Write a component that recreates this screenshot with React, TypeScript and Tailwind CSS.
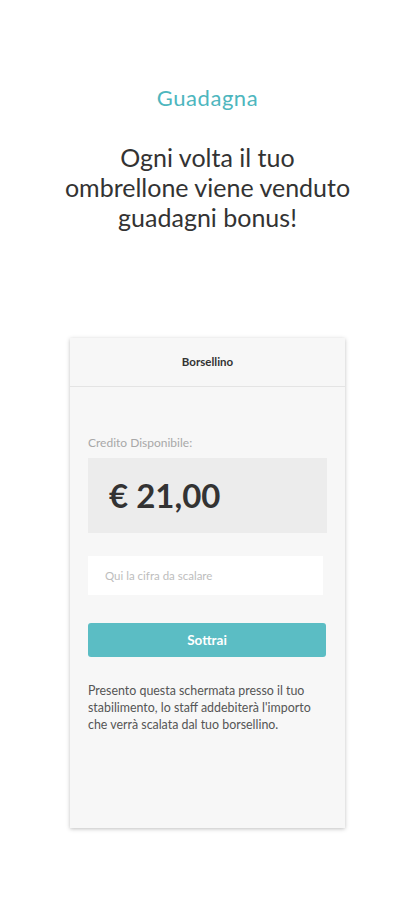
export default function App() {
    return (
        <div className="min-h-[900px] w-full bg-white flex flex-col items-center" style={{ fontFamily: "Lato, 'Open Sans', sans-serif" }}>
            <h2 className="mt-[84px] text-[22px] leading-[28px] text-[#4db6be] tracking-wide">Guadagna</h2>

            <p className="mt-[30px] text-center text-[25px] leading-[30px] text-[#333333]">
                Ogni volta il tuo
                <br />
                ombrellone viene venduto
                <br />
                guadagni bonus!
            </p>

            <div className="mt-[106px] w-[275px] h-[490px] bg-[#f7f7f7] shadow-[0_1px_4px_rgba(0,0,0,0.25)] flex flex-col">
                <div className="h-[49px] flex items-center justify-center border-b border-[#e4e4e4]">
                    <span className="text-[11.5px] font-bold text-[#333333]">Borsellino</span>
                </div>

                <div className="px-[18px] flex flex-col">
                    <span className="mt-[47px] text-[12px] text-[#a8a8a8]">Credito Disponibile:</span>

                    <div className="mt-[6px] h-[75px] bg-[#ececec] flex items-center pl-[21px]">
                        <span className="text-[33px] font-bold text-[#333333] leading-none">€ 21,00</span>
                    </div>

                    <input
                        type="text"
                        placeholder="Qui la cifra da scalare"
                        className="mt-[23px] h-[39px] w-[235px] bg-white px-[17px] text-[11.5px] text-[#333333] placeholder-[#bdbdbd] outline-none"
                    />

                    <button className="mt-[28px] h-[34px] w-[238px] rounded-[3px] bg-[#5bbdc4] text-white text-[13.5px] font-bold">
                        Sottrai
                    </button>

                    <p className="mt-[25px] text-[12.4px] leading-[17px] text-[#555555]">
                        Presento questa schermata presso il tuo
                        <br />
                        stabilimento, lo staff addebiterà l'importo
                        <br />
                        che verrà scalata dal tuo borsellino.
                    </p>
                </div>
            </div>
        </div>
    );
}
